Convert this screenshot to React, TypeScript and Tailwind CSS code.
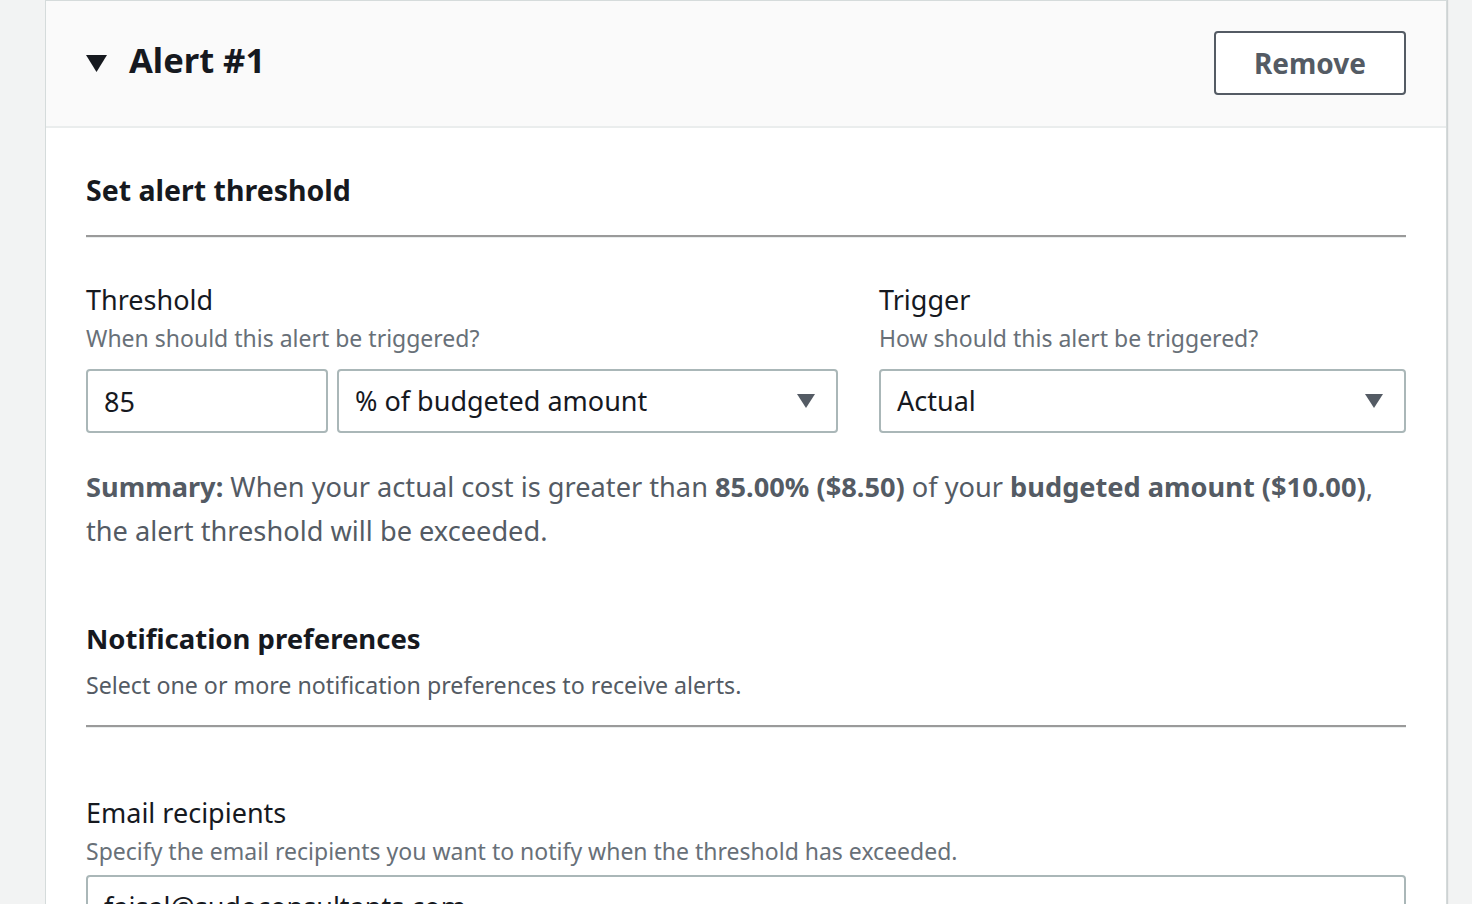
import { useState } from "react";

const font = { fontFamily: '"Noto Sans", "Open Sans", Arial, sans-serif' };

function Caret() {
  return (
    <svg width="20" height="16" viewBox="0 0 20 16" className="flex-shrink-0">
      <path d="M1 1h18L10 15z" fill="#545b64" />
    </svg>
  );
}

function Divider() {
  return <div className="h-[3px] border-t-2 border-[#9a9a9a] bg-[#eaeded]" />;
}

export default function App() {
  const [amount, setAmount] = useState("85");

  return (
    <div className="min-h-[904px] bg-[#f2f3f3] pl-[45px] pr-[25px] overflow-hidden" style={font}>
      <div className="bg-white border-x border-t border-[#d5dbdb] shadow-[1px_0_1px_rgba(0,28,36,0.15)]">
        <div className="h-[127px] bg-[#fafafa] border-b-2 border-[#eaeded] flex items-center justify-between pl-10 pr-10">
          <div className="flex items-center gap-[22px]">
            <svg width="21" height="17" viewBox="0 0 21 17">
              <path d="M0 0h21L10.5 17z" fill="#16191f" />
            </svg>
            <h2 className="text-[34.5px] font-bold text-[#16191f] leading-none pb-[6px]">Alert #1</h2>
          </div>
          <button className="w-[192px] h-[64px] border-2 border-[#545b64] rounded-[4px] bg-white text-[28px] font-bold text-[#545b64] mb-[2px]">
            Remove
          </button>
        </div>

        <div className="px-10 pt-[42px]">
          <h3 className="text-[28.5px] font-bold text-[#16191f] leading-[40px]">Set alert threshold</h3>
          <div className="mt-[25px]">
            <Divider />
          </div>

          <div className="flex gap-[41px] mt-[42px]">
            <div className="w-[752px]">
              <div className="text-[27px] text-[#16191f] leading-[40px]">Threshold</div>
              <div className="text-[23px] text-[#687078] leading-[34px] mt-[1px]">When should this alert be triggered?</div>
              <div className="flex gap-[9px] mt-[14px]">
                <input
                  value={amount}
                  onChange={(e) => setAmount(e.target.value)}
                  className="w-[242px] h-[64px] border-2 border-[#aab7b8] rounded-[4px] px-4 text-[27px] text-[#16191f] outline-none"
                  style={font}
                />
                <div className="flex-1 h-[64px] border-2 border-[#aab7b8] rounded-[4px] pl-4 pr-5 flex items-center justify-between">
                  <span className="text-[27px] text-[#16191f]">% of budgeted amount</span>
                  <Caret />
                </div>
              </div>
            </div>
            <div className="flex-1">
              <div className="text-[27px] text-[#16191f] leading-[40px]">Trigger</div>
              <div className="text-[23px] text-[#687078] leading-[34px] mt-[1px]">How should this alert be triggered?</div>
              <div className="h-[64px] mt-[14px] border-2 border-[#aab7b8] rounded-[4px] pl-4 pr-5 flex items-center justify-between">
                <span className="text-[27px] text-[#16191f]">Actual</span>
                <Caret />
              </div>
            </div>
          </div>

          <p className="mt-[32px] text-[27.2px] leading-[44px] text-[#545b64]">
            <b>Summary:</b> When your actual cost is greater than <b>85.00% ($8.50)</b> of your{" "}
            <b>budgeted amount ($10.00)</b>, the alert threshold will be exceeded.
          </p>

          <h3 className="mt-[66px] text-[27.5px] font-bold text-[#16191f] leading-[40px]">Notification preferences</h3>
          <div className="text-[23.2px] text-[#545b64] leading-[34px] mt-[9px]">
            Select one or more notification preferences to receive alerts.
          </div>
          <div className="mt-[23px]">
            <Divider />
          </div>

          <div className="mt-[65px] text-[27px] text-[#16191f] leading-[40px]">Email recipients</div>
          <div className="text-[23px] text-[#687078] leading-[34px] mt-[1px]">
            Specify the email recipients you want to notify when the threshold has exceeded.
          </div>
          <div className="h-[64px] mt-[7px] border-2 border-[#aab7b8] rounded-[4px] px-4 flex items-center">
            <span className="text-[27px] text-[#16191f]">faisal@sudoconsultants.com</span>
          </div>
        </div>
      </div>
    </div>
  );
}
